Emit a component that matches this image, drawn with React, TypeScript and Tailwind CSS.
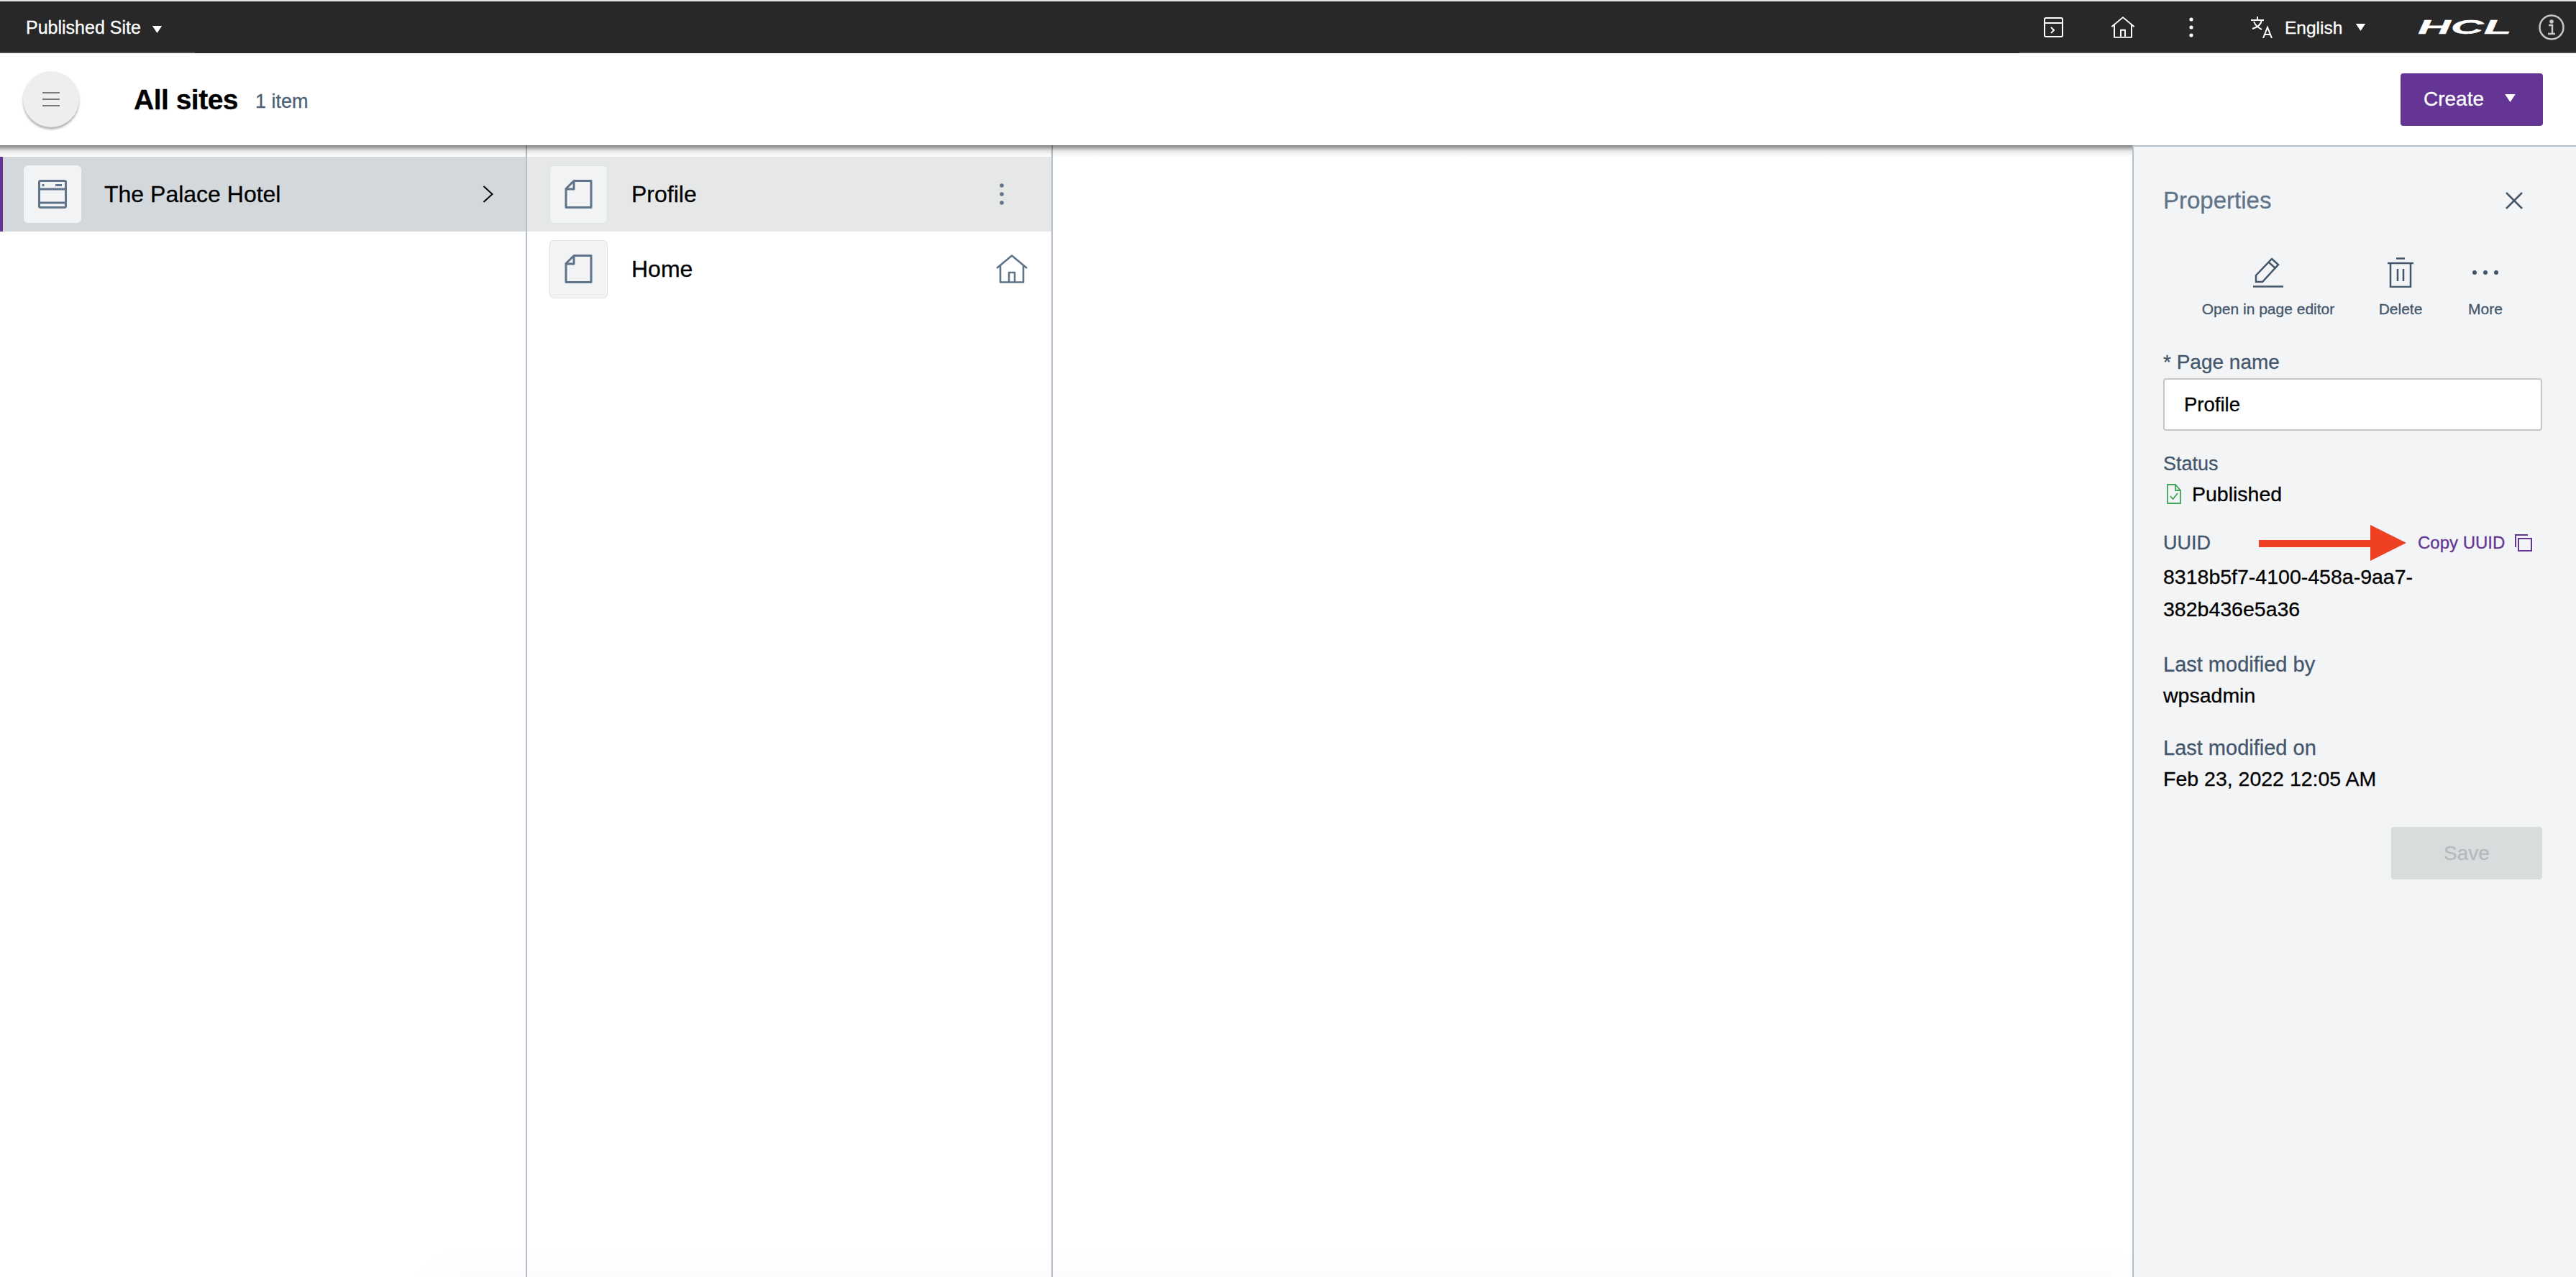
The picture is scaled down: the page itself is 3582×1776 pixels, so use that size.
function Caret({ className }: { className: string }) {
  return (
    <svg viewBox="0 0 16 12" className={className} fill="currentColor">
      <path d="M0 0h16L8 12z" />
    </svg>
  );
}

function PageIcon() {
  return (
    <svg viewBox="0 0 40 40" className="h-10 w-10 text-[#5f7389]" fill="none" stroke="currentColor" strokeWidth="3">
      <path d="M13 1.500h24v37H2v-26zM2 13h11V1.500" strokeLinejoin="round" />
    </svg>
  );
}

function HomeIcon({ className }: { className: string }) {
  return (
    <svg viewBox="0 0 44 40" className={className} fill="none" stroke="currentColor" strokeWidth="2.600">
      <path d="M1 19 22 1.500 43 19M6 15v23.500h32V15M18 38.500V25h8v13.500" strokeLinejoin="round" />
    </svg>
  );
}

function Field({ label, children }: { label: string; children: React.ReactNode }) {
  return (
    <div className="mb-[30px]">
      <div className="text-[29px] leading-[40px] text-[#43566b]">{label}</div>
      <div className="text-[28.500px] leading-[46px] text-black">{children}</div>
    </div>
  );
}

export default function App() {
  return (
    <div className="relative flex h-[1776px] w-[3582px] flex-col overflow-hidden bg-white font-['Liberation_Sans',Arial,sans-serif] [-webkit-text-stroke:0.3px]">
      {/* Top bar */}
      <div className="h-[2px] bg-[#e4e4e4]" />
      <header className="relative flex h-[72px] items-center bg-[#282828] text-white">
        <div className="absolute bottom-0 left-0 h-[2px] w-[271px] bg-[#4b4b50]" />
        <div className="absolute bottom-0 right-0 h-[2px] w-[774px] bg-[#4b4b50]" />
        <span className="ml-[36px] mt-[2px] text-[25px]">Published Site</span>
        <Caret className="ml-[15px] mt-[5px] h-[10px] w-[15px]" />
        <div className="ml-auto flex items-center">
          <svg viewBox="0 0 27 28" className="h-[28px] w-[27px]" fill="none" stroke="currentColor" strokeWidth="2">
            <rect x="1" y="1" width="25" height="26" rx="2" />
            <path d="M1 8h25M10 14l4 4-4 4" />
          </svg>
          <HomeIcon className="ml-[66px] h-[30px] w-[34px]" />
          <svg viewBox="0 0 6 28" className="ml-[75px] h-[28px] w-[6px]" fill="currentColor">
            <circle cx="3" cy="3" r="2.600" />
            <circle cx="3" cy="14" r="2.600" />
            <circle cx="3" cy="25" r="2.600" />
          </svg>
          <svg viewBox="0 0 32 30" className="ml-[80px] h-[30px] w-[32px]" fill="none" stroke="currentColor" strokeWidth="2">
            <path d="M0 5h18M9 0v5M15 5c-1 6-6 10-13 12M4 7c2 5 7 9 11 11M17 30l6-15 6 15M19 25h8" />
          </svg>
          <span className="ml-[15px] mt-[2px] w-[77px] text-[24.500px]">English</span>
          <Caret className="ml-[21px] h-[10px] w-[15px]" />
          <span className="ml-[72px] w-[125px] origin-left scale-x-[2.35] text-[27px] font-bold italic leading-none">HCL</span>
          <svg viewBox="0 0 36 36" className="ml-[43px] mr-[16px] h-[36px] w-[36px] text-[#c8c8c8]" fill="none" stroke="currentColor" strokeWidth="2.500">
            <circle cx="18" cy="18" r="16.500" />
            <path d="M14 15h5v12M13 27h10" />
            <circle cx="18" cy="10" r="1.500" fill="currentColor" />
          </svg>
        </div>
      </header>

      {/* Title row */}
      <div className="relative z-10 flex h-[128px] items-center bg-white pl-[32px] pr-[46px]">
        <button className="flex h-[78px] w-[78px] items-center justify-center rounded-full bg-[#eeeeee] shadow-[0_3px_3px_rgba(0,0,0,0.3)]">
          <svg viewBox="0 0 26 22" className="h-[22px] w-[26px] text-[#777b80]" fill="none" stroke="currentColor" strokeWidth="2">
            <path d="M1 2h24M1 11h24M1 20h24" />
          </svg>
        </button>
        <h1 className="ml-[76px] text-[39px] font-bold leading-none tracking-[-0.5px] text-black">All sites</h1>
        <span className="ml-[24px] mt-[6px] text-[27px] text-[#4b5f75]">1 item</span>
        <button className="ml-auto flex h-[73px] w-[198px] items-center rounded-[4px] bg-[#643594] pl-[32px] text-[28px] font-medium text-white">
          Create
          <Caret className="ml-[28px] mt-[-4px] h-[11px] w-[17px]" />
        </button>
      </div>

      <div className="flex flex-1">
        {/* Sites column */}
        <section className="relative flex w-[2965px]">
          <div className="pointer-events-none absolute inset-x-0 top-0 z-10 h-[16px] bg-gradient-to-b from-black/50 via-black/10 to-transparent" />
          <div className="w-[731px] pt-[16px]">
            <div className="flex h-[104px] items-center border-l-4 border-[#643594] bg-[#d3d8dc] pl-[29px]">
              <div className="flex h-[80px] w-[80px] items-center justify-center rounded-[6px] bg-[#f2f3f5]">
                <svg viewBox="0 0 40 40" className="h-10 w-10 text-[#5f7389]" fill="none" stroke="currentColor" strokeWidth="3">
                  <rect x="1.500" y="1.500" width="37" height="37" rx="2" />
                  <path d="M1.500 13h37M1.500 32h37" />
                  <path d="M7 6v3M24 7.500h9" />
                </svg>
              </div>
              <span className="ml-[32px] text-[32px] text-black">The Palace Hotel</span>
              <svg viewBox="0 0 15 24" className="ml-auto mr-[45px] h-[24px] w-[15px] text-black" fill="none" stroke="currentColor" strokeWidth="2">
                <path d="M1.500 1 13.500 12 1.500 23" />
              </svg>
            </div>
          </div>
          <div className="w-[733px] border-x-2 border-[#b3bfcc] pt-[16px]">
            <div className="flex h-[104px] items-center bg-[#e6e8e8] pl-[31px]">
              <div className="flex h-[81px] w-[81px] items-center justify-center rounded-[6px] border border-[#dfe2e5] bg-[#f2f3f5]">
                <PageIcon />
              </div>
              <span className="ml-[33px] text-[32px] text-black">Profile</span>
              <svg viewBox="0 0 6 30" className="ml-auto mr-[66px] h-[30px] w-[6px] text-[#5f7389]" fill="currentColor">
                <circle cx="3" cy="3" r="2.800" />
                <circle cx="3" cy="15" r="2.800" />
                <circle cx="3" cy="27" r="2.800" />
              </svg>
            </div>
            <div className="flex h-[104px] items-center pl-[31px]">
              <div className="flex h-[81px] w-[81px] items-center justify-center rounded-[6px] border border-[#dfe2e5] bg-[#f2f3f5]">
                <PageIcon />
              </div>
              <span className="ml-[33px] text-[32px] text-black">Home</span>
              <HomeIcon className="ml-auto mr-[33px] h-[40px] w-[44px] text-[#5f7389]" />
            </div>
          </div>
        </section>

        {/* Properties panel */}
        <aside className="relative z-20 flex-1 border-l-2 border-t-2 border-[#b3bfcc] bg-[#f3f4f6] pl-[41px] pr-[47px]">
          <div className="flex h-[152px] items-center justify-between pb-[2px] pr-[27px]">
            <h2 className="text-[33px] text-[#5f7489]">Properties</h2>
            <svg viewBox="0 0 24 24" className="h-[24px] w-[24px] text-[#43566b]" fill="none" stroke="currentColor" strokeWidth="2.500">
              <path d="M1 1l22 22M23 1 1 23" />
            </svg>
          </div>

          <div className="relative h-[76px] whitespace-nowrap text-[21px] text-[#43566b]">
            <div className="absolute left-[54px] top-[2px] flex w-[184px] flex-col items-center gap-[14px]">
              <svg viewBox="0 0 42 42" className="h-[42px] w-[42px]" fill="none" stroke="currentColor" strokeWidth="2.500">
                <path d="M4 34v-9L26 2l9 8-22 24zM0 40.500h42" />
                <path d="M22 7l9 8" />
              </svg>
              <span>Open in page editor</span>
            </div>
            <div className="absolute left-[300px] top-[2px] flex w-[60px] flex-col items-center gap-[14px]">
              <svg viewBox="0 0 36 42" className="h-[42px] w-[36px]" fill="none" stroke="currentColor" strokeWidth="2.500">
                <path d="M0 8h36M12 1.500h12M4 8v33h28V8M14 16v17M22 16v17" />
              </svg>
              <span>Delete</span>
            </div>
            <div className="absolute left-[424px] top-[2px] flex w-[48px] flex-col items-center gap-[14px]">
              <svg viewBox="0 0 36 42" className="h-[42px] w-[36px]" fill="currentColor">
                <circle cx="3" cy="21" r="3" />
                <circle cx="18" cy="21" r="3" />
                <circle cx="33" cy="21" r="3" />
              </svg>
              <span>More</span>
            </div>
          </div>

          <label className="mt-[52px] block text-[28px] leading-[40px] text-[#43566b]">* Page name</label>
          <input
            readOnly
            value="Profile"
            className="mt-[2px] block h-[73px] w-full rounded-[4px] border-2 border-[#c4c6c8] bg-white pl-[27px] text-[27.500px] text-black outline-none"
          />

          <div className="mt-[26px] text-[27px] leading-[40px] text-[#43566b]">Status</div>
          <div className="flex h-[44px] items-center text-[28.500px] text-black">
            <svg viewBox="0 0 20 28" className="ml-[5px] h-[28px] w-[20px] text-[#3fa35a]" fill="none" stroke="currentColor" strokeWidth="1.800">
              <path d="M1 1h11l7 8v18H1zM12 1v8h7M5 17l3.500 4L15 13" />
            </svg>
            <span className="ml-[15px]">Published</span>
          </div>

          <div className="relative mt-[24px] flex h-[44px] items-center text-[27px] text-[#43566b]">
            UUID
            <svg viewBox="0 0 205 50" className="absolute left-[133px] top-[-3px] h-[50px] w-[205px] text-[#ee4123]" fill="currentColor">
              <path d="M0 21h155V0l50 25-50 25V31H0z" />
            </svg>
            <span className="absolute left-[354px] text-[24px] text-[#643594]">Copy UUID</span>
            <svg viewBox="0 0 24 24" className="absolute left-[489px] h-[24px] w-[24px] text-[#643594]" fill="none" stroke="currentColor" strokeWidth="2">
              <path d="M5 23V6h18v17zM1 18V1h17" />
            </svg>
          </div>
          <div className="mt-[3px] w-[400px] text-[28.500px] leading-[45px] text-black">8318b5f7-4100-458a-9aa7-382b436e5a36</div>

          <div className="mt-[34px]">
            <Field label="Last modified by">wpsadmin</Field>
          </div>
          <Field label="Last modified on">Feb 23, 2022 12:05 AM</Field>

          <div className="mt-[44px] flex justify-end">
            <button className="h-[73px] w-[210px] rounded-[4px] bg-[#d9dcdd] text-[28px] font-medium text-[#b4b9bb]">Save</button>
          </div>
        </aside>
      </div>

      {/* Faint shadow rising from just below the page edge */}
      <div className="pointer-events-none absolute bottom-[-20px] left-[600px] z-30 h-[20px] w-[2370px] shadow-[0_0_60px_rgba(0,0,0,0.05)]" />
    </div>
  );
}
